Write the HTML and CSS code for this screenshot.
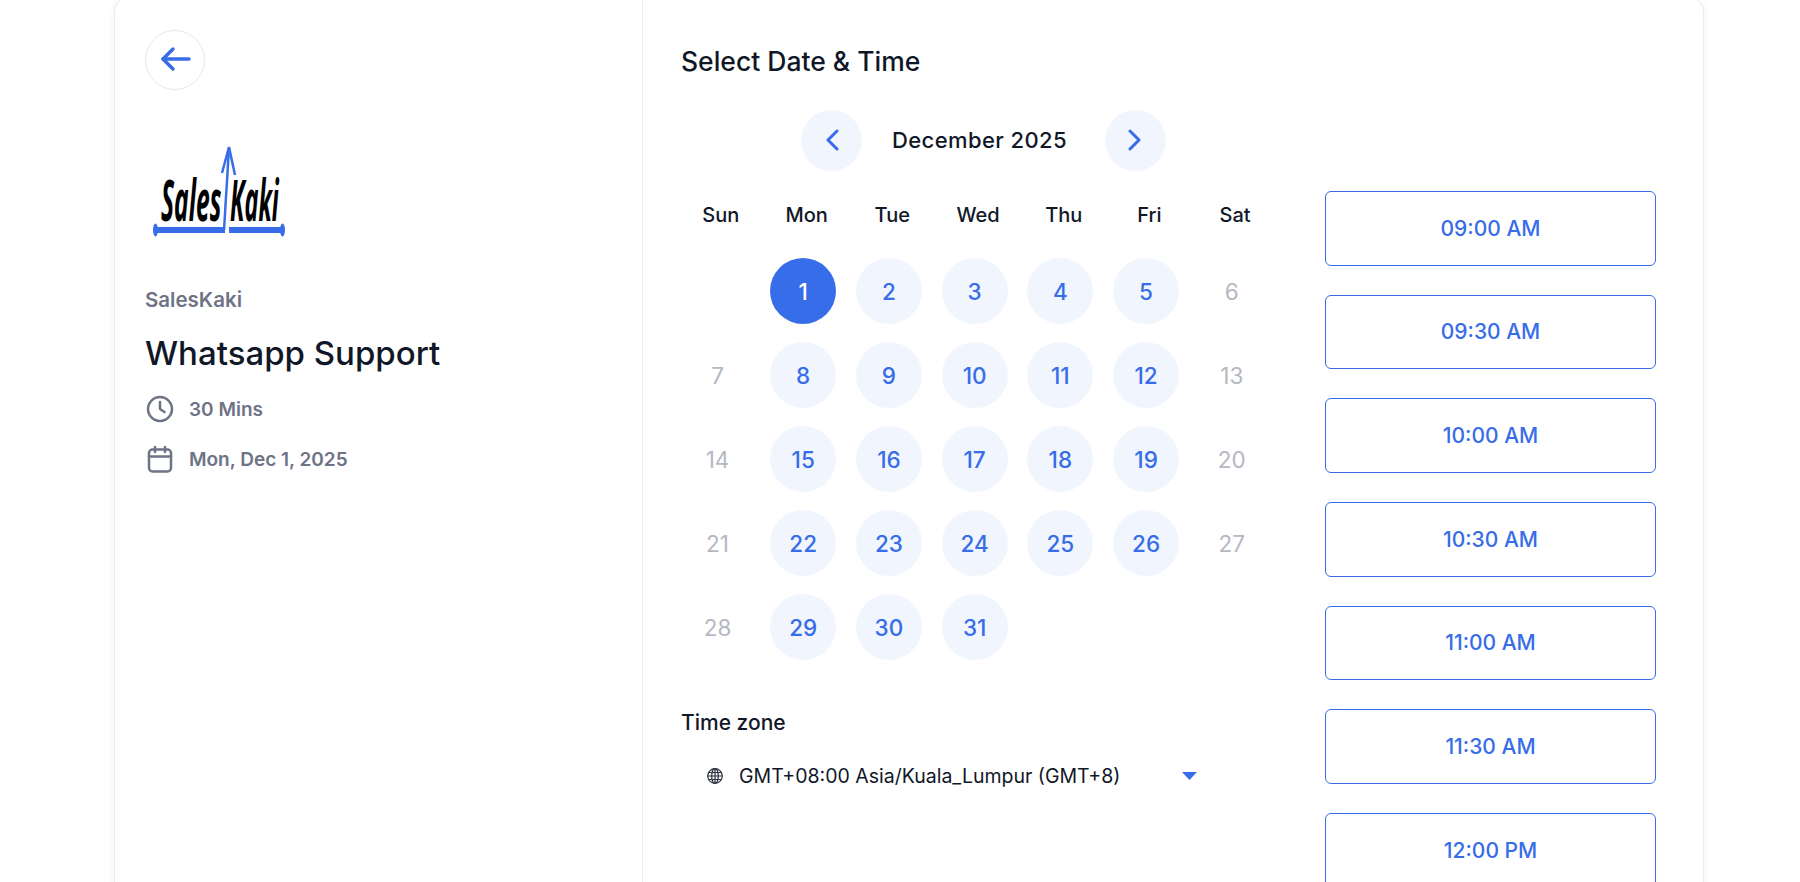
FILE: index.html
```html
<!DOCTYPE html>
<html lang="en">

<head>
	<meta charset="UTF-8">
	<meta name="viewport" content="width=device-width, initial-scale=1.0">
	<title>Whatsapp Support - Select Date &amp; Time</title>
	<link rel="stylesheet" href="styles.css">
</head>

<body>
	<main class="card">
		<section class="info">
			<button type="button" class="back-btn" aria-label="Back">
				<svg width="32" height="26" viewBox="0 0 32 26" fill="none" stroke="#376de8" stroke-width="3.500" stroke-linecap="round" stroke-linejoin="round">
					<path d="M30 13H4"/>
					<path d="M14 3 4 13l10 10"/>
				</svg>
			</button>
			<svg class="logo" width="132" height="92" viewBox="0 0 132 92">
				<text transform="translate(8 76) scale(.44 1.020)" class="logo-text">Sales</text>
				<text transform="translate(77 76) scale(.42 1.020)" class="logo-text">Kaki</text>
				<path d="M71 85 76 3" fill="none" stroke="#376de8" stroke-width="2.500"/>
				<path d="M2 85H72" stroke="#376de8" stroke-width="6"/>
				<path d="M76 85H130" stroke="#376de8" stroke-width="6"/>
				<path d="M69 28 76 2l6 28" fill="none" stroke="#376de8" stroke-width="2.500"/>
				<ellipse cx="2.500" cy="85" rx="2.500" ry="6.500" fill="#376de8"/>
				<ellipse cx="129.500" cy="85" rx="2.500" ry="6.500" fill="#376de8"/>
			</svg>
			<div class="org">SalesKaki</div>
			<h1 class="event">Whatsapp Support</h1>
			<div class="meta">
				<svg width="28" height="28" viewBox="0 0 28 28" fill="none" stroke="#6e7385" stroke-width="2.500" stroke-linecap="round" stroke-linejoin="round">
					<circle cx="14" cy="14" r="12"/>
					<path d="M14 7v7l4.500 3"/>
				</svg>
				<span>30 Mins</span>
			</div>
			<div class="meta">
				<svg width="28" height="28" viewBox="0 0 28 28" fill="none" stroke="#6e7385" stroke-width="2.500" stroke-linecap="round" stroke-linejoin="round">
					<rect x="3" y="4.500" width="22" height="22" rx="3.500"/>
					<path d="M3 11.500h22M9 2v5M19 2v5"/>
				</svg>
				<span>Mon, Dec 1, 2025</span>
			</div>
		</section>

		<section class="picker">
			<h2 class="picker-title">Select Date &amp; Time</h2>
			<div class="picker-body">
				<div class="calendar">
					<div class="month-nav">
						<button type="button" class="nav-btn" aria-label="Previous month">
							<svg width="14" height="22" viewBox="0 0 14 22" fill="none" stroke="#376de8" stroke-width="3" stroke-linecap="round" stroke-linejoin="round">
								<path d="M12 2 3 11l9 9"/>
							</svg>
						</button>
						<div class="month-label">December 2025</div>
						<button type="button" class="nav-btn" aria-label="Next month">
							<svg width="14" height="22" viewBox="0 0 14 22" fill="none" stroke="#376de8" stroke-width="3" stroke-linecap="round" stroke-linejoin="round">
								<path d="m2 2 9 9-9 9"/>
							</svg>
						</button>
					</div>

					<div class="weekdays">
						<div>Sun</div>
						<div>Mon</div>
						<div>Tue</div>
						<div>Wed</div>
						<div>Thu</div>
						<div>Fri</div>
						<div>Sat</div>
					</div>

					<div class="days">
						<div class="day open selected first">1</div>
						<div class="day open">2</div>
						<div class="day open">3</div>
						<div class="day open">4</div>
						<div class="day open">5</div>
						<div class="day">6</div>
						<div class="day">7</div>
						<div class="day open">8</div>
						<div class="day open">9</div>
						<div class="day open">10</div>
						<div class="day open">11</div>
						<div class="day open">12</div>
						<div class="day">13</div>
						<div class="day">14</div>
						<div class="day open">15</div>
						<div class="day open">16</div>
						<div class="day open">17</div>
						<div class="day open">18</div>
						<div class="day open">19</div>
						<div class="day">20</div>
						<div class="day">21</div>
						<div class="day open">22</div>
						<div class="day open">23</div>
						<div class="day open">24</div>
						<div class="day open">25</div>
						<div class="day open">26</div>
						<div class="day">27</div>
						<div class="day">28</div>
						<div class="day open">29</div>
						<div class="day open">30</div>
						<div class="day open">31</div>
					</div>

					<div class="tz-label">Time zone</div>
					<div class="tz-select">
						<svg width="16" height="16" viewBox="0 0 16 16" fill="none" stroke="#2b3040" stroke-width="1.200">
							<circle cx="8" cy="8" r="7.300"/>
							<ellipse cx="8" cy="8" rx="3.300" ry="7.300"/>
							<path d="M8 .7v14.600M.7 8h14.600M1.700 4.500h12.600M1.700 11.500h12.600"/>
						</svg>
						<span class="tz-name">GMT+08:00 Asia/Kuala_Lumpur (GMT+8)</span>
						<svg class="tz-caret" width="15" height="8" viewBox="0 0 15 8">
							<path d="M0 0h15L7.500 8z" fill="#376de8"/>
						</svg>
					</div>
				</div>

				<div class="slots">
					<button type="button" class="slot">09:00 AM</button>
					<button type="button" class="slot">09:30 AM</button>
					<button type="button" class="slot">10:00 AM</button>
					<button type="button" class="slot">10:30 AM</button>
					<button type="button" class="slot">11:00 AM</button>
					<button type="button" class="slot">11:30 AM</button>
					<button type="button" class="slot">12:00 PM</button>
				</div>
			</div>
		</section>
	</main>
</body>

</html>
```

FILE: styles.css
```css
html {
	height: 100%;
}

body {
	margin: 0;
	height: 100vh;
	overflow: hidden;
	background: #fff;
	color: #101828;
	font-family: "Inter", "Liberation Sans", sans-serif;
}

button {
	font-family: inherit;
	cursor: pointer;
}

.card {
	display: flex;
	width: 1588px;
	height: 1000px;
	margin: -4px 0 0 114px;
	border: 1px solid #e9eaee;
	border-radius: 16px;
	box-shadow: 0 2px 8px rgba(16, 24, 40, 0.06);
	background: #fff;
}

/* left column */
.info {
	width: 528px;
	flex: none;
	box-sizing: border-box;
	padding: 33px 30px 0;
	border-right: 1px solid #e9eaee;
}

.back-btn {
	display: flex;
	align-items: center;
	justify-content: center;
	width: 60px;
	height: 60px;
	padding: 0 0 3px;
	border: 1px solid #e6e8f0;
	border-radius: 50%;
	background: #fff;
}

.logo {
	display: block;
	margin: 55px 0 0 8px;
}

.logo-text {
	font-family: "Open Sans", "Liberation Sans", sans-serif;
	font-size: 56px;
	font-weight: 700;
	font-style: italic;
	fill: #000;
}

.org {
	margin-top: 51px;
	font-size: 20.500px;
	line-height: 24px;
	font-weight: 600;
	color: #6e7385;
}

.event {
	margin: 21px 0 0;
	font-size: 33px;
	line-height: 40px;
	font-weight: 500;
	color: #101828;
}

.meta {
	display: flex;
	align-items: center;
	gap: 15px;
	height: 28px;
	margin-top: 22px;
	padding-left: 1px;
	font-size: 19px;
	font-weight: 600;
	color: #6e7385;
}

.event + .meta {
	margin-top: 22px;
}

/* right column */
.picker {
	flex: 1;
	min-width: 0;
	padding: 49px 47px 0 38px;
}

.picker-title {
	margin: 0;
	font-size: 26.500px;
	line-height: 30px;
	font-weight: 500;
	color: #101828;
}

.picker-body {
	display: flex;
	justify-content: space-between;
}

.calendar {
	width: 600px;
	margin-left: -3px;
}

.month-nav {
	display: flex;
	align-items: center;
	height: 61px;
	margin-top: 34px;
	padding-left: 123px;
}

.nav-btn {
	display: flex;
	align-items: center;
	justify-content: center;
	width: 61px;
	height: 61px;
	padding: 0 0 2px;
	border: 0;
	border-radius: 50%;
	background: #f1f5fe;
}

.month-label {
	margin: 0 38px 2px 30px;
	font-size: 22px;
	font-weight: 500;
	letter-spacing: 0.4px;
	white-space: nowrap;
}

.weekdays,
.days {
	display: grid;
	grid-template-columns: repeat(7, 1fr);
}

.weekdays {
	margin-top: 31.500px;
	font-size: 20px;
	line-height: 24px;
	font-weight: 500;
	text-align: center;
}

.days {
	row-gap: 18px;
	margin-top: 31.500px;
}

.day {
	display: flex;
	align-items: center;
	justify-content: center;
	width: 66px;
	height: 66px;
	margin-left: 6.500px;
	border-radius: 50%;
	font-size: 22.500px;
	color: #b5b8c2;
}

.day.first {
	grid-column-start: 2;
}

.day.open {
	background: #f1f5fe;
	color: #376de8;
	font-weight: 500;
}

.day.selected {
	background: #376de8;
	color: #fff;
}

.tz-label {
	margin: 50.500px 0 0 3px;
	font-size: 21px;
	line-height: 24px;
	font-weight: 500;
}

.tz-select {
	display: flex;
	align-items: center;
	height: 24px;
	margin-top: 29px;
	padding-left: 29px;
}

.tz-name {
	margin-left: 16px;
	font-size: 19.500px;
	white-space: nowrap;
}

.tz-caret {
	margin-left: 62px;
}

.slots {
	display: flex;
	flex-direction: column;
	gap: 29px;
	flex: none;
	width: 331px;
	margin-top: 115px;
}

.slot {
	flex: none;
	height: 74.670px;
	border: 1px solid #376de8;
	border-radius: 6px;
	background: #fff;
	color: #376de8;
	font-size: 21px;
	font-weight: 500;
}
```
